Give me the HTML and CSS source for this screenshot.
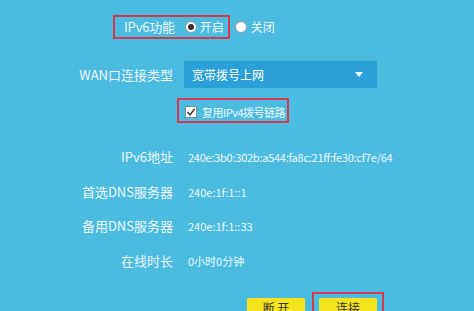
FILE: index.html
```html
<!DOCTYPE html>
<html lang="zh-CN">
<head>
  <meta charset="UTF-8" />
  <title>IPv6设置</title>
  <link rel="stylesheet" href="styles.css">
</head>
<body>

<div class="form">
  <div class="row-switch">
    <div class="mark switch-box">
      <span class="label">IPv6功能</span>
      <span class="radio on"></span>
      <span class="opt">开启</span>
    </div>
    <span class="radio off"></span>
    <span class="opt">关闭</span>
  </div>

  <div class="field wan">
    <span class="label">WAN口连接类型</span>
    <div class="select">
      <span>宽带拨号上网</span>
      <span class="arrow"></span>
    </div>
  </div>

  <div class="row-check">
    <div class="mark check-box">
      <span class="checkbox">
        <svg width="10" height="10" viewBox="0 0 10 10"><polyline points="1.5,5 4,7.8 8.8,1.8" fill="none" stroke="#333" stroke-width="1.4"/></svg>
      </span>
      <span class="opt">复用IPv4拨号链路</span>
    </div>
  </div>

  <div class="info">
    <div class="field">
      <span class="label">IPv6地址</span>
      <span class="value addr">240e:3b0:302b:a544:fa8c:21ff:fe30:cf7e/64</span>
    </div>
    <div class="field">
      <span class="label">首选DNS服务器</span>
      <span class="value">240e:1f:1::1</span>
    </div>
    <div class="field">
      <span class="label">备用DNS服务器</span>
      <span class="value">240e:1f:1::33</span>
    </div>
    <div class="field">
      <span class="label">在线时长</span>
      <span class="value">0小时0分钟</span>
    </div>
  </div>

  <div class="buttons">
    <button class="btn first">断 开</button>
    <div class="mark btn-box">
      <button class="btn">连接</button>
    </div>
  </div>
</div>

</body>
</html>
```

FILE: styles.css
```css
body {
  margin: 0;
  background: #4bbbe0;
  font-family: "Noto Sans CJK SC", "Noto Sans", sans-serif;
  color: #eef8fc;
  overflow: hidden;
}

.form {
  padding-top: 15px;
}

.label {
  font-size: 13px;
  line-height: 20px;
  white-space: nowrap;
}

.opt {
  font-size: 12px;
  line-height: 20px;
  white-space: nowrap;
}

.mark {
  border: 2px solid #cf3a4c;
  box-sizing: border-box;
}

/* IPv6 on / off */
.row-switch {
  display: flex;
  align-items: center;
  padding-left: 113px;
  height: 24px;
}

.switch-box {
  display: flex;
  align-items: center;
  height: 24px;
  padding: 0 4px 0 9px;
}

.switch-box .label {
  margin-right: 10px;
  letter-spacing: -0.2px;
}

.radio {
  width: 12px;
  height: 12px;
  border-radius: 50%;
  background: white;
  border: 1px solid #8a9aa3;
  box-sizing: border-box;
  margin-right: 3px;
  position: relative;
}

.radio.on::after {
  content: "";
  position: absolute;
  left: 2px;
  top: 2px;
  width: 6px;
  height: 6px;
  border-radius: 50%;
  background: #3a3030;
}

.radio.off {
  margin-left: 5px;
  margin-right: 4px;
}

/* rows with label column */
.field {
  display: grid;
  grid-template-columns: 173px auto;
  column-gap: 15px;
  align-items: center;
}

.field .label {
  text-align: right;
}

.wan {
  margin-top: 22px;
  column-gap: 11px;
}

.select {
  width: 193px;
  height: 27px;
  background: #2b9fd8;
  display: flex;
  align-items: center;
  justify-content: space-between;
  padding: 0 14px 0 8px;
  box-sizing: border-box;
  font-size: 12px;
  color: white;
}

.arrow {
  width: 0;
  height: 0;
  border-left: 4px solid transparent;
  border-right: 4px solid transparent;
  border-top: 5px solid white;
}

/* checkbox */
.row-check {
  margin-top: 10px;
  padding-left: 177px;
}

.check-box {
  width: 112px;
  height: 25px;
  display: flex;
  align-items: center;
  padding: 2px 0 0 6px;
}

.checkbox {
  width: 12px;
  height: 12px;
  flex: none;
  background: white;
  border: 1px solid #7a8a94;
  box-sizing: border-box;
  display: flex;
  align-items: center;
  justify-content: center;
  margin-right: 5px;
}

.check-box .opt {
  font-size: 11px;
  letter-spacing: -0.5px;
}

/* info rows */
.info {
  margin-top: 24px;
  display: flex;
  flex-direction: column;
  gap: 14.5px;
}

.value {
  font-size: 11px;
  line-height: 20px;
  white-space: nowrap;
}

.addr {
  letter-spacing: -0.25px;
}

/* buttons */
.buttons {
  margin-top: 21px;
  padding-left: 247px;
  display: flex;
  align-items: flex-start;
  gap: 7px;
}

.btn {
  width: 58px;
  height: 26px;
  background: #f6e51e;
  border: none;
  border-radius: 2px;
  font-family: "Noto Sans CJK SC", sans-serif;
  font-size: 12px;
  color: #333;
  padding: 0 0 6px;
  cursor: pointer;
}

.btn.first {
  margin-top: 6px;
}

.btn-box {
  display: flex;
  padding: 4px 5px 0;
  width: 72px;
  height: 30px;
}
```
